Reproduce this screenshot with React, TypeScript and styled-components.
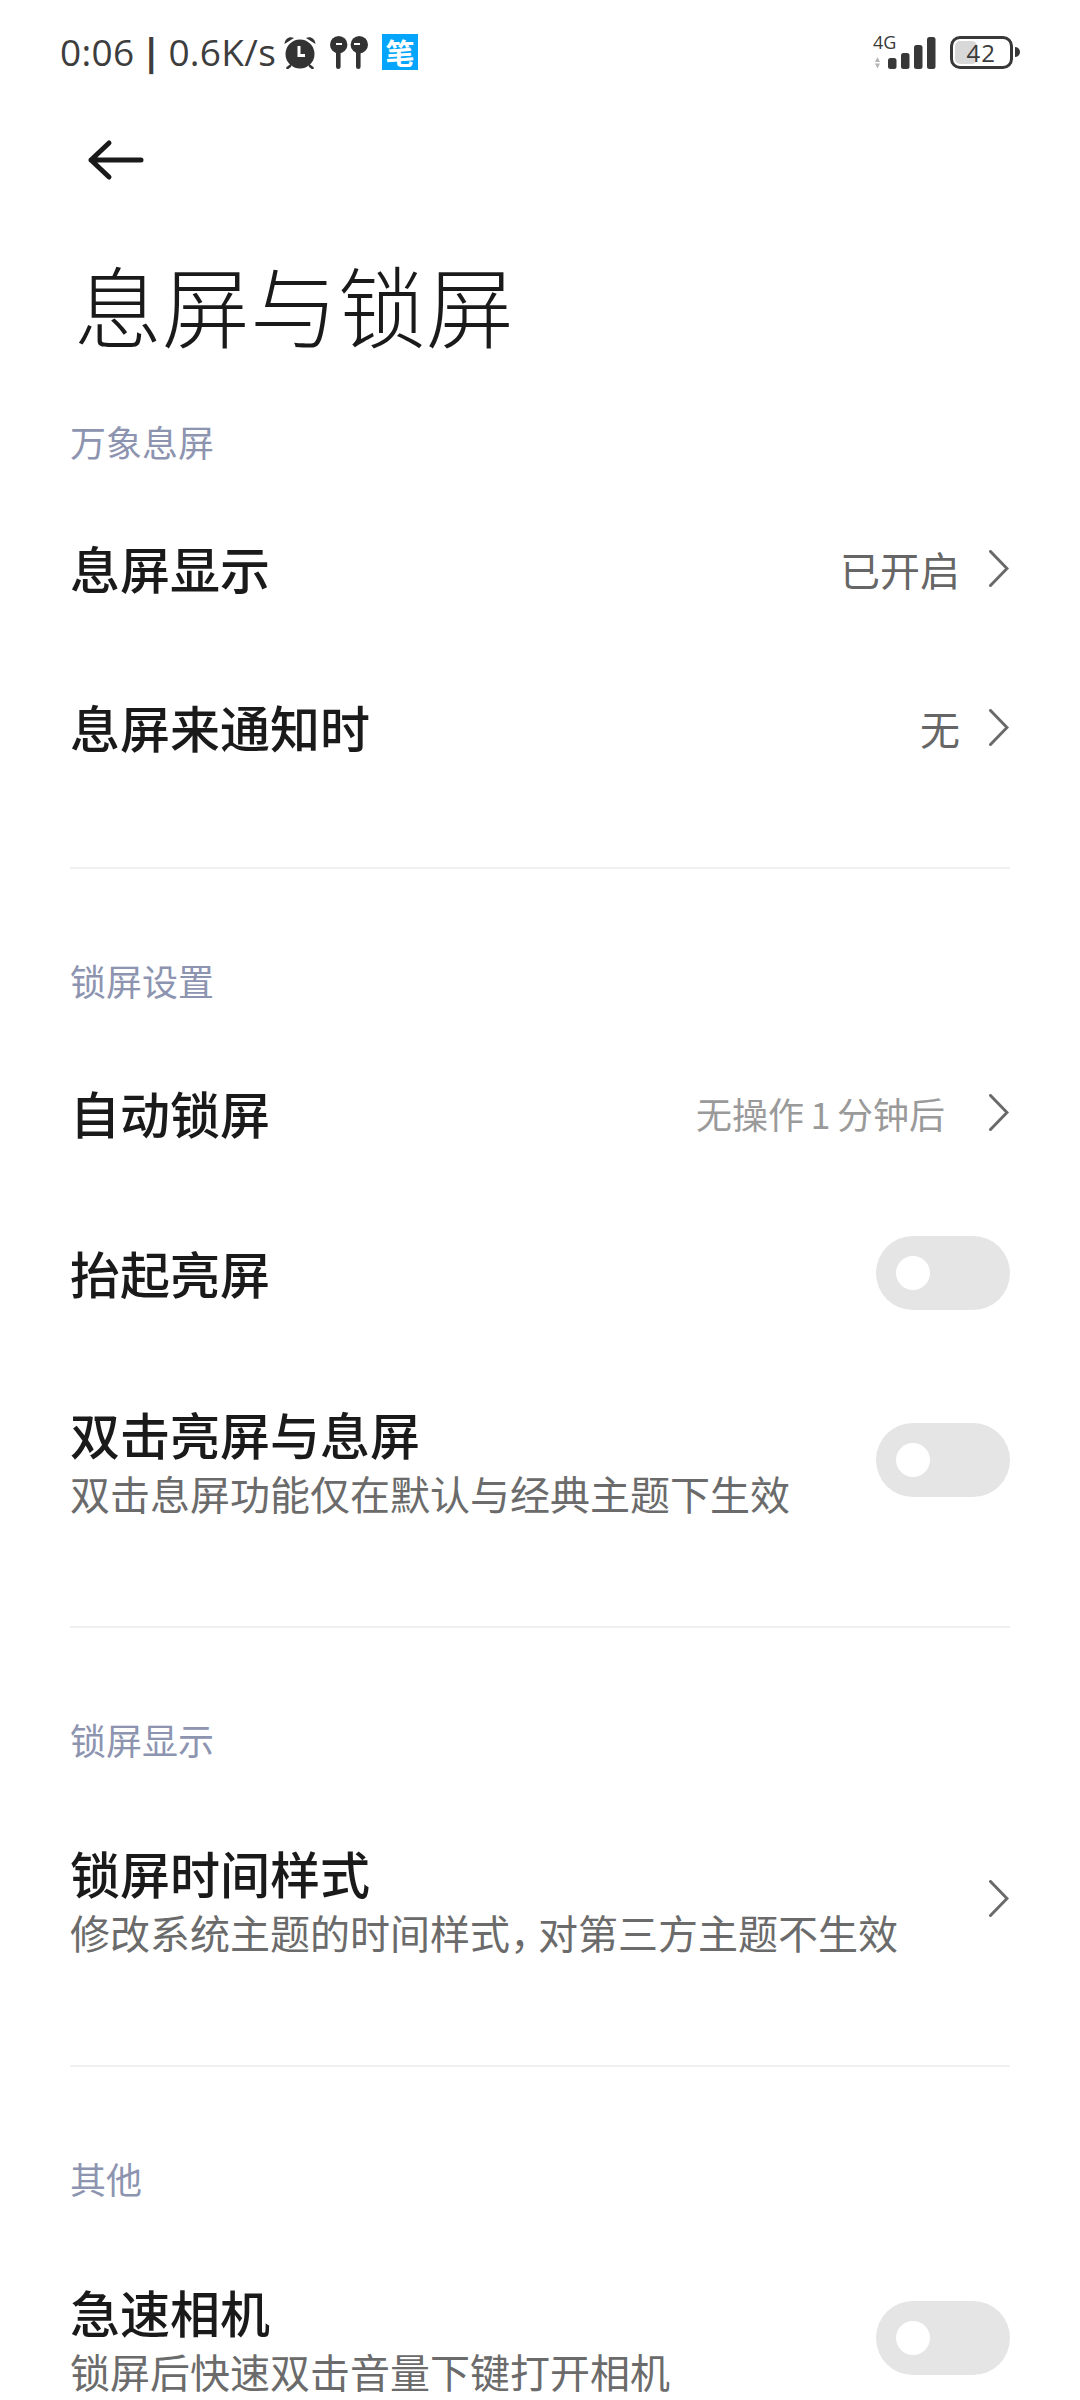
import React from "react";
import styled, { createGlobalStyle } from "styled-components";

const Global = createGlobalStyle`
  html, body { margin: 0; padding: 0; background: #fff; }
  body { font-family: "Noto Sans CJK SC", "Noto Sans", sans-serif; }
  #root { width: 1080px; height: 2400px; overflow: hidden; }
`;

const Page = styled.div`
  width: 1080px;
  height: 2400px;
  overflow: hidden;
  background: #fff;
  display: flex;
  flex-direction: column;
`;

const StatusBar = styled.div`
  height: 104px;
  flex: none;
  padding: 0 60px 0 60px;
  box-sizing: border-box;
  display: flex;
  align-items: center;
  justify-content: space-between;
  color: #3a3a3a;
`;

const StatusLeft = styled.div`
  display: flex;
  align-items: center;
`;

const StatusRight = styled.div`
  display: flex;
  align-items: center;
`;

const Clock = styled.span`
  font-family: "Open Sans", "Noto Sans", sans-serif;
  font-size: 37px;
  line-height: 44px;
  letter-spacing: 0.3px;
  color: #3d3d3d;
  white-space: nowrap;
`;

const Pipe = styled.span`
  display: inline-block;
  width: 34px;
  text-align: center;
  font-weight: 700;
`;

const PenBadge = styled.span`
  width: 36px;
  height: 36px;
  margin-left: 14px;
  background: #04a5fb;
  color: #fff;
  font-size: 29px;
  line-height: 36px;
  font-weight: 700;
  text-align: center;
`;

const BackButton = styled.div`
  height: 136px;
  flex: none;
  box-sizing: border-box;
  padding: 35px 0 0 86px;
  display: flex;
  align-items: flex-start;
`;

const Title = styled.h1`
  margin: 0;
  height: 126px;
  flex: none;
  padding-left: 74px;
  font-size: 88px;
  line-height: 126px;
  font-weight: 300;
  color: #1a1a1a;
  white-space: nowrap;
`;

const SectionLabel = styled.div<{ $top: number; $bottom: number }>`
  height: 48px;
  flex: none;
  margin: ${(p) => p.$top}px 0 ${(p) => p.$bottom}px;
  padding-left: 70px;
  font-size: 36px;
  line-height: 48px;
  color: #8d94b0;
`;

const Row = styled.div<{ $h: number }>`
  height: ${(p) => p.$h}px;
  flex: none;
  padding: 0 71px 0 70px;
  display: flex;
  align-items: center;
  justify-content: space-between;
`;

const RowText = styled.div`
  display: flex;
  flex-direction: column;
  padding-top: 6px;
`;

const RowTitle = styled.div`
  font-size: 50px;
  line-height: 60px;
  font-weight: 500;
  color: #1a1a1a;
  white-space: nowrap;
`;

const SoloTitle = styled(RowTitle)`
  padding-bottom: 3px;
`;

const RowSub = styled.div`
  font-size: 40px;
  line-height: 60px;
  color: #6b6b6b;
  white-space: nowrap;
`;

const NarrowComma = styled.span`
  letter-spacing: -12px;
`;

const RowRight = styled.div`
  display: flex;
  align-items: center;
`;

const Value = styled.span`
  font-size: 40px;
  line-height: 50px;
  color: #666;
  margin-right: 28px;
  white-space: nowrap;
`;

const MutedValue = styled.span`
  font-size: 36px;
  line-height: 50px;
  color: #9a9a9a;
  margin-right: 43px;
  word-spacing: -1.5px;
  white-space: nowrap;
`;

const Divider = styled.div<{ $top: number }>`
  height: 2px;
  flex: none;
  margin: ${(p) => p.$top}px 70px 0;
  background: #f0f0f0;
`;

const Toggle = styled.div`
  width: 134px;
  height: 74px;
  margin-right: -1px;
  border-radius: 37px;
  background: #e5e5e5;
  display: flex;
  align-items: center;
  padding-left: 20px;
  box-sizing: border-box;
`;

const Knob = styled.div`
  width: 34px;
  height: 34px;
  border-radius: 50%;
  background: #fff;
`;

const Chevron = () => (
  <svg width="21" height="38" viewBox="0 0 21 38" fill="none">
    <path d="M2.5 1.5 L19 18.5 L2.5 35.5" stroke="#6a6a6a" strokeWidth="3" strokeLinecap="round" strokeLinejoin="miter" />
  </svg>
);

const Arrow = () => (
  <svg width="58" height="42" viewBox="0 0 58 42" fill="none">
    <path d="M23 4 L5 21 L23 38 M5 21 H55" stroke="#1a1a1a" strokeWidth="5" strokeLinecap="round" strokeLinejoin="round" />
  </svg>
);

const AlarmIcon = styled((props: { className?: string }) => (
  <svg className={props.className} width="32" height="33" viewBox="0 0 32 33">
    <circle cx="16" cy="18" r="14.5" fill="#333" />
    <path d="M0.5 8 C1 2 6 0 10 2 Z M31.5 8 C31 2 26 0 22 2 Z" fill="#333" />
    <path d="M6 30 L3.5 32 M26 30 L28.5 32" stroke="#333" strokeWidth="2.6" strokeLinecap="round" />
    <path d="M15 10 V19.5 H21" stroke="#fff" strokeWidth="3" fill="none" />
  </svg>
))`
  margin-left: 8px;
`;

const BudsIcon = styled((props: { className?: string }) => (
  <svg className={props.className} width="38" height="33" viewBox="0 0 38 33">
    <circle cx="8.7" cy="8.7" r="8.7" fill="#333" />
    <rect x="6" y="10" width="4.6" height="23" rx="2.3" fill="#333" />
    <rect x="6" y="7" width="6" height="2" fill="#fff" />
    <circle cx="29.3" cy="8.7" r="8.7" fill="#333" />
    <rect x="26" y="10" width="4.6" height="23" rx="2.3" fill="#333" />
    <rect x="24" y="7" width="6" height="2" fill="#fff" />
  </svg>
))`
  margin-left: 14px;
`;

const Signal = () => (
  <svg width="64" height="33" viewBox="0 0 64 33">
    <path d="M2 26 L4.5 21 L7 26 Z M2 27.5 H7 L4.5 32.5 Z" fill="#b5b5b5" />
    <rect x="15" y="22" width="8.5" height="11" rx="2.5" fill="#383838" />
    <rect x="28" y="17" width="8.5" height="16" rx="2.5" fill="#383838" />
    <rect x="41" y="9" width="8.5" height="24" rx="2.5" fill="#383838" />
    <rect x="54" y="1" width="8.5" height="32" rx="2.5" fill="#383838" />
  </svg>
);

const SignalBox = styled.div`
  position: relative;
  width: 64px;
  height: 33px;
`;

const NetLabel = styled.span`
  position: absolute;
  left: 0;
  top: -4px;
  font-family: "Open Sans", sans-serif;
  font-size: 18px;
  line-height: 20px;
  color: #3a3a3a;
`;

const Battery = styled.div`
  position: relative;
  width: 57px;
  height: 27px;
  margin-left: 13px;
  border: 3px solid #383838;
  border-radius: 10px;
  display: flex;
  align-items: center;
  justify-content: flex-end;
  box-sizing: content-box;
  font-family: "Open Sans", sans-serif;
  font-size: 24px;
  letter-spacing: 1px;
  color: #3a3a3a;
`;

const BatteryFill = styled.div`
  position: absolute;
  left: 2px;
  top: 2px;
  bottom: 2px;
  width: 22px;
  border-radius: 5px;
  background: #d8d8d8;
`;

const BatteryLevel = styled.span`
  position: relative;
  margin-right: 14px;
`;

const BatteryCap = styled.div`
  width: 5px;
  height: 10px;
  margin-left: 2px;
  border-radius: 0 5px 5px 0;
  background: #383838;
`;

export default function App() {
  return (
    <Page>
      <Global />
      <StatusBar>
        <StatusLeft>
          <Clock>0:06<Pipe>|</Pipe>0.6K/s</Clock>
          <AlarmIcon />
          <BudsIcon />
          <PenBadge>笔</PenBadge>
        </StatusLeft>
        <StatusRight>
          <SignalBox>
            <NetLabel>4G</NetLabel>
            <Signal />
          </SignalBox>
          <Battery>
            <BatteryFill />
            <BatteryLevel>42</BatteryLevel>
          </Battery>
          <BatteryCap />
        </StatusRight>
      </StatusBar>
      <BackButton>
        <Arrow />
      </BackButton>
      <Title>息屏与锁屏</Title>

      <SectionLabel $top={51} $bottom={24}>万象息屏</SectionLabel>
      <Row $h={159}>
        <SoloTitle>息屏显示</SoloTitle>
        <RowRight><Value>已开启</Value><Chevron /></RowRight>
      </Row>
      <Row $h={159}>
        <SoloTitle>息屏来通知时</SoloTitle>
        <RowRight><Value>无</Value><Chevron /></RowRight>
      </Row>
      <Divider $top={60} />

      <SectionLabel $top={87} $bottom={29}>锁屏设置</SectionLabel>
      <Row $h={160}>
        <SoloTitle>自动锁屏</SoloTitle>
        <RowRight><MutedValue>无操作 1 分钟后</MutedValue><Chevron /></RowRight>
      </Row>
      <Row $h={160}>
        <SoloTitle>抬起亮屏</SoloTitle>
        <Toggle><Knob /></Toggle>
      </Row>
      <Row $h={214}>
        <RowText>
          <RowTitle>双击亮屏与息屏</RowTitle>
          <RowSub>双击息屏功能仅在默认与经典主题下生效</RowSub>
        </RowText>
        <Toggle><Knob /></Toggle>
      </Row>
      <Divider $top={59} />

      <SectionLabel $top={87} $bottom={29}>锁屏显示</SectionLabel>
      <Row $h={214}>
        <RowText>
          <RowTitle>锁屏时间样式</RowTitle>
          <RowSub>修改系统主题的时间样式<NarrowComma>，</NarrowComma>对第三方主题不生效</RowSub>
        </RowText>
        <Chevron />
      </Row>
      <Divider $top={59} />

      <SectionLabel $top={87} $bottom={29}>其他</SectionLabel>
      <Row $h={214}>
        <RowText>
          <RowTitle>急速相机</RowTitle>
          <RowSub>锁屏后快速双击音量下键打开相机</RowSub>
        </RowText>
        <Toggle><Knob /></Toggle>
      </Row>
    </Page>
  );
}
